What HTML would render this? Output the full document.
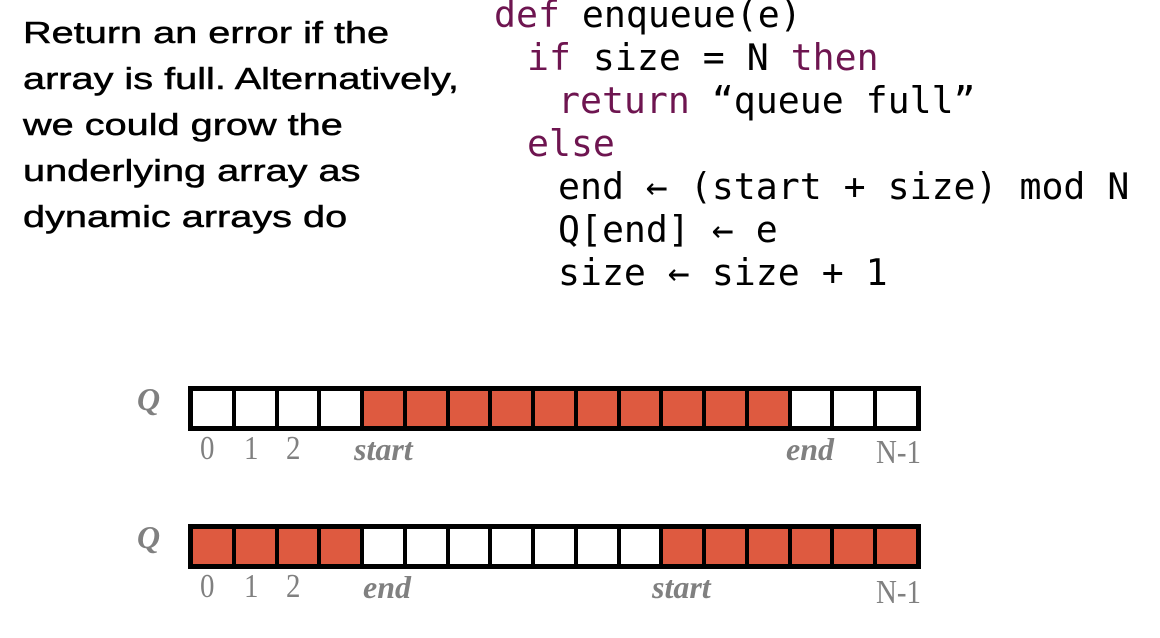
<!DOCTYPE html>
<html><head><meta charset="utf-8"><style>
body{margin:0;width:1160px;height:638px;background:#fff;position:relative;overflow:hidden}
.t{position:absolute;left:23px;top:10px;font:31px/46px "Liberation Sans",sans-serif;color:#000;transform:scaleX(1.28);transform-origin:0 0;white-space:nowrap;-webkit-text-stroke:0.5px #000}
.c{position:absolute;font:36.5px "DejaVu Sans Mono","Liberation Mono",monospace;color:#000;white-space:pre;line-height:43px}
.k{color:#6e1550}
.arr{position:absolute;left:188px;width:733px;height:45px;box-sizing:border-box;background:#000;padding:5px;display:flex;gap:4px}
.arr div{flex:1;background:#fff}
.arr .r{background:#de5a40}
.l{position:absolute;font:34px "Liberation Serif",serif;color:#808080;transform:scaleX(0.85);transform-origin:0 0}
.i{font-style:italic;font-weight:bold;font-size:32px;transform:none}
</style></head><body>
<div class="t">Return an error if the<br>array is full. Alternatively,<br>we could grow the<br>underlying array as<br>dynamic arrays do</div>
<div class="c" style="left:494px;top:-7px"><span class="k">def</span> enqueue(e)</div>
<div class="c" style="left:527px;top:36px"><span class="k">if</span> size = N <span class="k">then</span></div>
<div class="c" style="left:558px;top:79px"><span class="k">return</span> “queue full”</div>
<div class="c" style="left:527px;top:122px"><span class="k">else</span></div>
<div class="c" style="left:558px;top:165px">end ← (start + size) mod N</div>
<div class="c" style="left:558px;top:208px">Q[end] ← e</div>
<div class="c" style="left:558px;top:251px">size ← size + 1</div>

<div class="l i" style="left:137px;top:381px">Q</div>
<div class="arr" style="top:386px"><div></div><div></div><div></div><div></div><div class="r"></div><div class="r"></div><div class="r"></div><div class="r"></div><div class="r"></div><div class="r"></div><div class="r"></div><div class="r"></div><div class="r"></div><div class="r"></div><div></div><div></div><div></div></div>
<div class="l" style="left:200px;top:430px">0</div>
<div class="l" style="left:244px;top:430px">1</div>
<div class="l" style="left:286px;top:430px">2</div>
<div class="l i" style="left:354px;top:431px">start</div>
<div class="l i" style="left:786px;top:431px">end</div>
<div class="l" style="left:876px;top:434px">N-1</div>

<div class="l i" style="left:137px;top:519px">Q</div>
<div class="arr" style="top:524px"><div class="r"></div><div class="r"></div><div class="r"></div><div class="r"></div><div></div><div></div><div></div><div></div><div></div><div></div><div></div><div class="r"></div><div class="r"></div><div class="r"></div><div class="r"></div><div class="r"></div><div class="r"></div></div>
<div class="l" style="left:200px;top:568px">0</div>
<div class="l" style="left:244px;top:568px">1</div>
<div class="l" style="left:286px;top:568px">2</div>
<div class="l i" style="left:363px;top:569px">end</div>
<div class="l i" style="left:652px;top:569px">start</div>
<div class="l" style="left:876px;top:574px">N-1</div>
</body></html>
